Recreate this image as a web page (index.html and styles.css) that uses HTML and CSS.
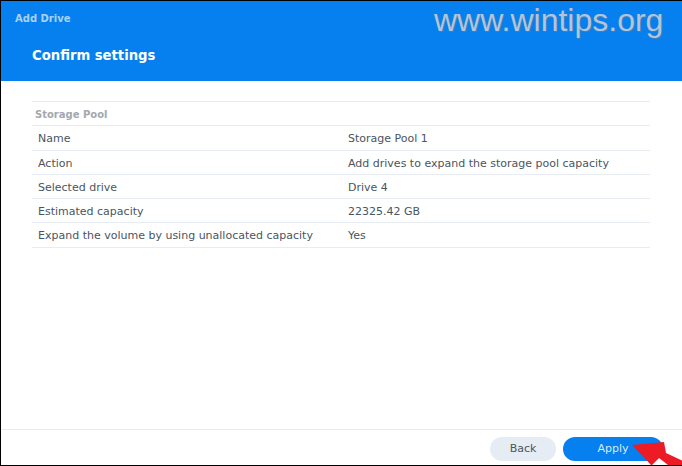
FILE: index.html
```html
<!DOCTYPE html>
<html lang="en">
<head>
<meta charset="utf-8">
<title>Add Drive</title>
<link rel="stylesheet" href="styles.css">
</head>
<body>
<div class="window">
  <header class="banner">
    <div class="app-title">Add Drive</div>
    <h1 class="step-title">Confirm settings</h1>
    <div class="watermark">www.wintips.org</div>
  </header>
  <main class="content">
    <div class="summary">
      <div class="group">Storage Pool</div>
      <div class="row"><span class="label">Name</span><span class="value">Storage Pool 1</span></div>
      <div class="row"><span class="label">Action</span><span class="value">Add drives to expand the storage pool capacity</span></div>
      <div class="row"><span class="label">Selected drive</span><span class="value">Drive 4</span></div>
      <div class="row"><span class="label">Estimated capacity</span><span class="value">22325.42 GB</span></div>
      <div class="row"><span class="label">Expand the volume by using unallocated capacity</span><span class="value">Yes</span></div>
    </div>
  </main>
  <footer class="actions">
    <button class="btn btn-back">Back</button>
    <button class="btn btn-apply">Apply</button>
  </footer>
  <svg class="arrow" width="52" height="30" viewBox="0 0 52 30"><polygon points="1,10 33,7 35,18 52,26 52,30 37,30 28,23 21,30 20,30" fill="#ed1c24"/></svg>
</div>
</body>
</html>
```

FILE: styles.css
```css
* { box-sizing: border-box; }
html, body { margin: 0; padding: 0; }
body { width: 682px; height: 466px; overflow: hidden; background: #fff; font-family: "DejaVu Sans", sans-serif; }
.window { position: relative; width: 682px; height: 466px; display: flex; flex-direction: column; border-top: 1px solid #000; border-left: 1px solid #000; border-bottom: 1px solid #000; background: #fff; overflow: hidden; }
.banner { position: relative; height: 80px; flex: none; background: #0580ee; padding: 11px 0 0 14px; }
.app-title { font-size: 10px; font-weight: 700; line-height: 13px; color: #a9d2f8; }
.step-title { margin: 22px 0 0 17px; font-size: 13.2px; font-weight: 700; line-height: 18px; color: #fff; }
.watermark { position: absolute; left: 433px; top: 0; font-family: "Liberation Sans", sans-serif; font-size: 32px; line-height: 38px; color: #b4c4dc; text-shadow: 1px 1px 1px #4a7fb8; }
.content { flex: 1; padding: 20px 32px 0 31px; }
.summary { border-top: 1px solid #e6ecf2; }
.group { height: 24.3px; padding-left: 3px; font-size: 10px; font-weight: 700; line-height: 25px; color: #a3a8ae; border-bottom: 1px solid #e6ecf2; }
.row { display: grid; grid-template-columns: 316px 1fr; height: 24.3px; border-bottom: 1px solid #e6ecf2; font-size: 11px; line-height: 25px; color: #4a5560; }
.label { padding-left: 6px; white-space: nowrap; }
.value { white-space: nowrap; }
.actions { height: 36px; flex: none; display: flex; justify-content: flex-end; align-items: center; gap: 7px; padding: 2px 19px 0 0; border-top: 1px solid #e6ecf2; }
.btn { height: 24px; border: 0; border-radius: 12px; font-family: "DejaVu Sans", sans-serif; font-size: 11px; padding: 0; }
.btn-back { width: 66px; background: #e6ecf3; color: #4a5560; }
.btn-apply { width: 100px; background: #0580ee; color: #d8ebfc; }
.arrow { position: absolute; left: 630px; bottom: 0; }
```
